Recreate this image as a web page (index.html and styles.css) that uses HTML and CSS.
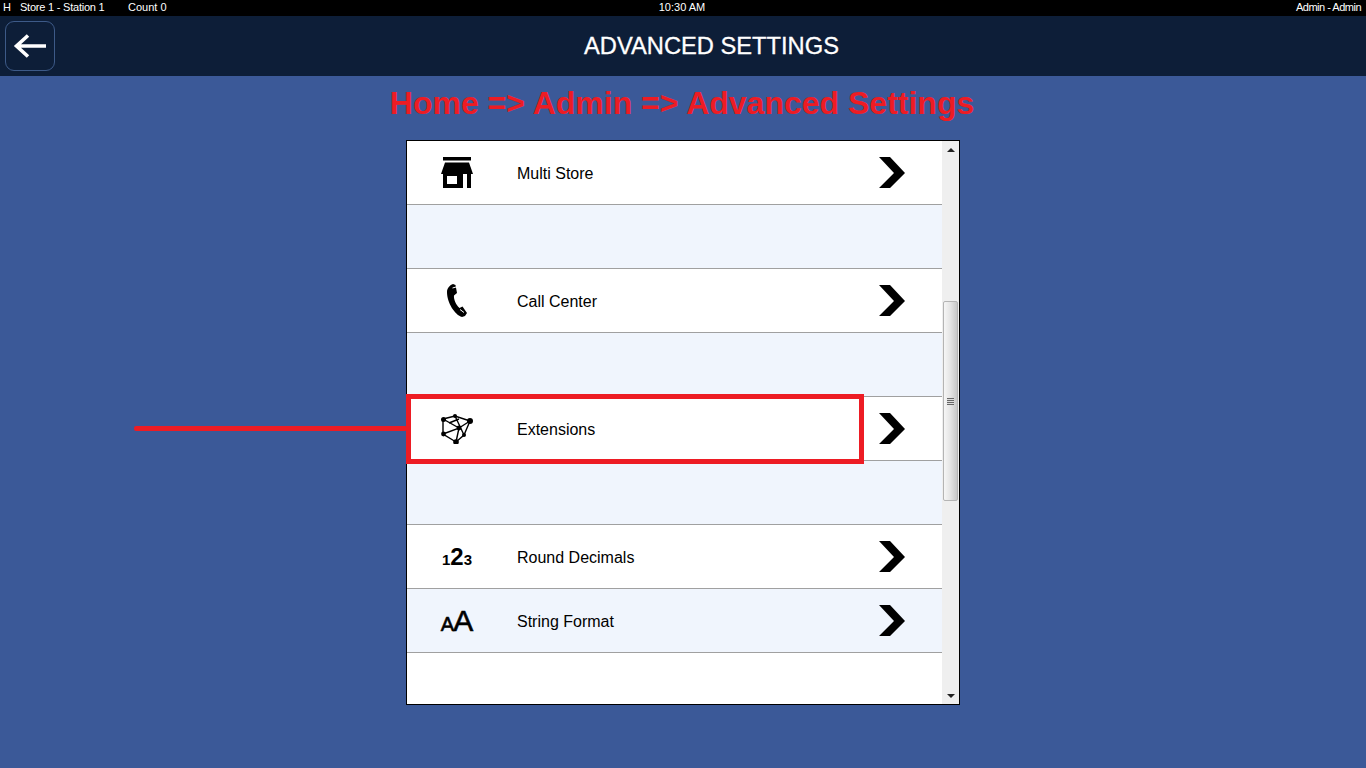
FILE: index.html
```html
<!DOCTYPE html>
<html lang="en">
<head>
<meta charset="utf-8">
<title>Advanced Settings</title>
<link rel="stylesheet" href="styles.css">
</head>
<body>
<div class="status">
  <div class="status-left"><span class="s-h">H</span><span class="s-store">Store 1 - Station 1</span><span>Count 0</span></div>
  <div class="status-time">10:30 AM</div>
  <div class="status-right">Admin - Admin</div>
</div>
<header class="top">
  <button class="back" aria-label="Back">
    <svg width="34" height="26" viewBox="0 0 34 26"><path d="M33 13H4M15 2.500 3.500 13 15 23.500" fill="none" stroke="#fff" stroke-width="3.600"/></svg>
  </button>
  <h1 class="top-title">ADVANCED SETTINGS</h1>
</header>
<main class="main">
  <h2 class="crumb">Home =&gt; Admin =&gt; Advanced Settings</h2>
  <section class="panel">
    <div class="list">
      <div class="row">
        <div class="ico">
          <svg width="32" height="31" viewBox="0 0 32 31"><path d="M2 0H30V3.500H2Z"/><path d="M4 5.500H28L32 17H0Z"/><path fill-rule="evenodd" d="M2 16H30V31H26V16H22V31H2ZM6 19V27H16V19Z"/></svg>
        </div>
        <span class="label">Multi Store</span>
        <svg class="chev" width="26" height="31" viewBox="0 0 26 31"><path d="M0 0H11L26 16 11 31H0L15 16Z"/></svg>
      </div>
      <div class="row alt"></div>
      <div class="row">
        <div class="ico">
          <svg width="22" height="33" viewBox="0 0 22 33"><path d="M7 0 9.500 1 11 9 8 11.500C7.500 15 10 21 13.500 24L16.500 22.500 21 29 19 32 16 33C9 31 1 19 1 8 1 4 4 1 7 0Z"/><path d="M6.500 4 10 3M14 25.500 18 28.500" stroke="#fff" stroke-width="1" fill="none"/></svg>
        </div>
        <span class="label">Call Center</span>
        <svg class="chev" width="26" height="31" viewBox="0 0 26 31"><path d="M0 0H11L26 16 11 31H0L15 16Z"/></svg>
      </div>
      <div class="row alt"></div>
      <div class="row">
        <div class="ico">
          <svg width="32" height="30" viewBox="0 0 32 30"><path d="M2 5 14 2 29 7 23 21 15 28 2 20ZM2 5 18 14 29 7M14 2 23 21M2 20 18 14 15 28M8 9 18 5" fill="none" stroke="#000" stroke-width="1.400"/><circle cx="2.500" cy="5.500" r="2.500"/><circle cx="14" cy="2" r="2"/><circle cx="29" cy="7" r="3"/><circle cx="18" cy="14" r="2.400"/><circle cx="2.500" cy="20" r="2.400"/><circle cx="23" cy="21" r="2"/><circle cx="15" cy="28" r="2.800"/></svg>
        </div>
        <span class="label">Extensions</span>
        <svg class="chev" width="26" height="31" viewBox="0 0 26 31"><path d="M0 0H11L26 16 11 31H0L15 16Z"/></svg>
      </div>
      <div class="row alt"></div>
      <div class="row">
        <div class="ico glyph"><span class="g-sm">1</span><span class="g-lg">2</span><span class="g-sm">3</span></div>
        <span class="label">Round Decimals</span>
        <svg class="chev" width="26" height="31" viewBox="0 0 26 31"><path d="M0 0H11L26 16 11 31H0L15 16Z"/></svg>
      </div>
      <div class="row alt">
        <div class="ico glyph"><span class="g-a">A</span><span class="g-b">A</span></div>
        <span class="label">String Format</span>
        <svg class="chev" width="26" height="31" viewBox="0 0 26 31"><path d="M0 0H11L26 16 11 31H0L15 16Z"/></svg>
      </div>
    </div>
    <div class="scrollbar">
      <div class="sb-btn"><span class="tri-up"></span></div>
      <div class="sb-track">
        <div class="sb-thumb"><span class="grip"></span></div>
      </div>
      <div class="sb-btn"><span class="tri-down"></span></div>
    </div>
  </section>
</main>
<div class="mark-line"></div>
<div class="mark-box"></div>
</body>
</html>
```
FILE: styles.css
```css
* { box-sizing: border-box; }
html, body { margin: 0; height: 100%; }
body {
  width: 1366px;
  height: 768px;
  overflow: hidden;
  background: #3b5998;
  font-family: "Liberation Sans", Arial, sans-serif;
  display: flex;
  flex-direction: column;
  position: relative;
}
.status {
  height: 16px;
  flex: none;
  background: #000;
  color: #fff;
  font-size: 11px;
  line-height: 14px;
  display: grid;
  grid-template-columns: 1fr auto 1fr;
  padding: 0 5px 0 3px;
}
.status-left { display: flex; }
.s-h { width: 17px; }
.s-store { width: 108px; letter-spacing: -0.22px; }
.status-right { text-align: right; letter-spacing: -0.5px; }
.top {
  height: 60px;
  flex: none;
  background: #0d1e38;
  display: flex;
  align-items: center;
  padding-left: 5px;
}
.back {
  width: 50px;
  height: 50px;
  padding: 0;
  background: transparent;
  border: 1px solid #3d5a88;
  border-radius: 9px;
  display: flex;
  align-items: center;
  justify-content: center;
}
.top-title {
  flex: 1;
  margin: 0 0 0 -55px;
  text-align: center;
  padding-left: 57px;
  color: #fff;
  font-size: 23.7px;
  font-weight: 400;
  line-height: 61px;
  -webkit-text-stroke: 0.3px #fff;
}
.main {
  flex: 1;
  display: flex;
  flex-direction: column;
  align-items: center;
}
.crumb {
  margin: 9px 0 0;
  padding-right: 2px;
  height: 55px;
  color: #ed1c24;
  font-size: 32px;
  font-weight: 700;
  line-height: 36px;
}
.panel {
  width: 554px;
  height: 565px;
  background: #fff;
  border: 1px solid #000;
  display: flex;
}
.list { flex: 1; min-width: 0; }
.row {
  height: 64px;
  border-bottom: 1px solid #a0a0a0;
  background: #fff;
  display: flex;
  align-items: center;
}
.row.alt { background: #f0f5fd; }
.ico {
  width: 100px;
  flex: none;
  display: flex;
  align-items: center;
  justify-content: center;
}
.label {
  margin-left: 10px;
  padding-top: 2px;
  font-size: 16px;
  color: #000;
  flex: 1;
}
.chev { flex: none; margin-right: 37px; }
.glyph { font-weight: 700; color: #000; align-items: baseline; }
.g-sm { font-size: 15px; }
.g-lg { font-size: 24px; }
.g-a { font-size: 20px; font-weight: 400; -webkit-text-stroke: 0.6px #000; }
.g-b { font-size: 30px; font-weight: 400; -webkit-text-stroke: 0.6px #000; margin-left: -1px; }
.scrollbar {
  width: 17px;
  flex: none;
  background: #efefef;
  display: flex;
  flex-direction: column;
}
.sb-btn {
  height: 17px;
  display: flex;
  align-items: center;
  justify-content: center;
  flex: none;
}
.tri-up, .tri-down {
  width: 0;
  height: 0;
  border-left: 4px solid transparent;
  border-right: 4px solid transparent;
}
.tri-up { border-bottom: 4px solid #222; }
.tri-down { border-top: 4px solid #222; }
.sb-track { flex: 1; padding: 143px 0 0 1px; }
.sb-thumb {
  width: 15px;
  height: 200px;
  border: 1px solid #b4b4b4;
  border-radius: 2px;
  background: linear-gradient(to right, #f6f6f6, #e4e4e4 50%, #c8c8c8);
  display: flex;
  align-items: center;
  justify-content: center;
}
.grip {
  width: 7px;
  height: 7px;
  background: repeating-linear-gradient(to bottom, #666 0 1px, #ddd 1px 2px);
}
.mark-line {
  position: absolute;
  left: 134px;
  top: 426px;
  width: 273px;
  height: 5px;
  background: #ed1c24;
  border-radius: 2px;
}
.mark-box {
  position: absolute;
  left: 406px;
  top: 394px;
  width: 458px;
  height: 70px;
  border: 5px solid #ed1c24;
}
```
